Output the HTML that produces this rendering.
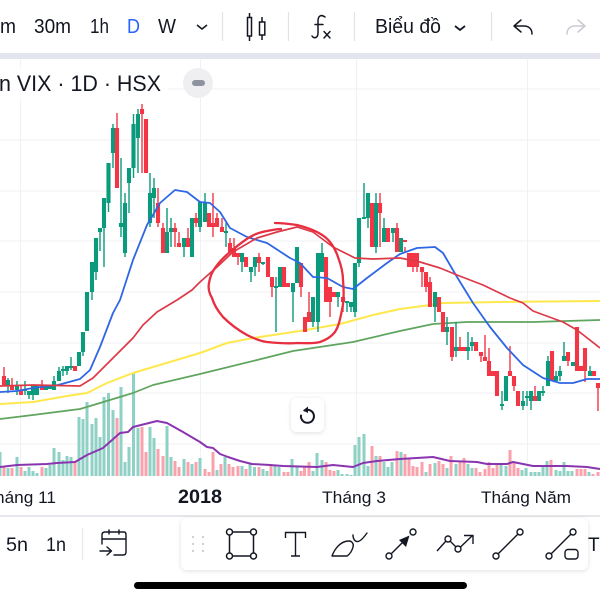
<!DOCTYPE html>
<html><head><meta charset="utf-8"><style>
html,body{margin:0;padding:0;background:#fff;width:600px;height:600px;overflow:hidden}
svg{display:block;filter:blur(.35px)}
text{font-family:"Liberation Sans",sans-serif;fill:#131722}
</style></head><body>
<svg width="600" height="600" viewBox="0 0 600 600" xmlns="http://www.w3.org/2000/svg">
<defs><filter id="s" x="-20%" y="-30%" width="140%" height="160%"><feDropShadow dx="0" dy="1" stdDeviation="2" flood-color="#000" flood-opacity=".13"/></filter></defs>
<rect width="600" height="600" fill="#fff"/>
<!-- grid -->
<path d="M0 89H600M0 140H600M0 191H600M0 241H600M0 292H600M0 343H600M0 393H600M0 444H600M20.500 59V476M200.500 59V476M356.500 59V476M527.500 59V476" stroke="#f0f1f4" stroke-width="1" fill="none"/>
<!-- volume -->
<path fill="none" stroke="#8fd1c4" stroke-width="3" d="M0 476V452M8 476V468M17 476V457M25 476V471M29 476V467M33 476V471M37 476V473M46 476V468M50 476V465M54 476V448M59 476V452M63 476V460M67 476V456M71 476V457M79 476V417M83 476V419M87 476V402M92 476V424M96 476V418M100 476V437M104 476V397M108.500 476V393M113 476V410M121 476V387M125 476V462M129 476V447M133.500 476V373M138 476V428M150 476V427M154 476V438M167 476V426M171 476V457M184 476V459M192 476V464M200 476V458M217 476V470M225 476V457M242 476V466M250 476V464M254.500 476V467M263 476V469M267 476V471M275 476V466M279 476V467M292 476V459M297 476V466M313 476V471M317 476V453M322 476V460M338 476V470M342 476V474M347 476V474M351 476V475M355 476V445M359 476V437M364 476V434M368 476V466M376 476V456M384 476V462M388 476V467M392 476V462M401 476V452M426 476V472M435 476V463M447 476V468M456 476V464M468 476V464M472 476V468M501 476V463M506 476V466M522 476V470M526 476V468M531 476V472M535 476V472M539 476V472M543 476V467M547 476V461M556 476V470M560 476V471M564 476V462M568 476V471M572 476V471M589 476V472"/>
<path fill="none" stroke="#f9a2ac" stroke-width="3" d="M4 476V467M12 476V468M21 476V467M42 476V467M75 476V462M117 476V418M142 476V427M146 476V452M158 476V449M163 476V456M175 476V461M179 476V467M188 476V462M196 476V462M205 476V469M209 476V472M213 476V452M221 476V464M229 476V464M233 476V467M238 476V466M246 476V469M259 476V467M271 476V466M284 476V472M288 476V472M301 476V471M304.500 476V467M309 476V462M326 476V462M330 476V470M334 476V471M372 476V446M380 476V456M397 476V451M405 476V454M409 476V459M413 476V466M417 476V467M422 476V462M430 476V464M439 476V461M443 476V464M451 476V456M460 476V461M464 476V458M476 476V468M480 476V472M485 476V469M489 476V462M493 476V468M497 476V463M510 476V450M514 476V462M518 476V468M551 476V460M577 476V469M581 476V469M585 476V469M593 476V474M598 476V472"/>
<!-- MA lines -->
<polyline fill="none" stroke="#8a35b0" stroke-width="2" stroke-linejoin="round" points="0,467 17,465 47,464 57,463 75,462 87,455 103,448 120,433 128,432 133,427 157,421 167,423 183,432 200,442 207,447 213,448 220,454 228,457 240,461 252,464 270,465 283,466 317,467 333,465 353,467 363,463 377,461 400,459 433,457 450,461 477,462 487,464 507,464 513,462 533,466 567,466 587,467 600,469"/>
<polyline fill="none" stroke="#5fa55f" stroke-width="1.700" stroke-linejoin="round" points="0,419 33,415 80,409 100,403 133,393 153,385 200,374 257,360 293,351 353,342 400,331 433,324 467,322 533,322 600,320"/>
<polyline fill="none" stroke="#ffe84d" stroke-width="2" stroke-linejoin="round" points="0,404 33,402 67,396 87,393 107,383 133,373 200,353 227,343 253,338 300,331 340,324 373,315 400,309 430,305 443,303 500,302 600,301"/>
<!-- candles -->
<path fill="none" stroke="#0a9a7c" stroke-width="1.400" d="M8 378V393M17 381V395M25 381V395M29 391V399M33 386V400M37 386V395M46 386V390M50 386V389M54 376V390M59 367V381M63 366V376M67 366V375M71 357V370M79 352V366M83 332V356M87 292V331M92 262V300M96 238V280M100 228V251M104 198V267M108.500 163V212M113 124V168M121 158V237M125 193V257M129 168V213M133.500 114V178M138 109V173M150 173V227M154 178V218M167 208V253M171 218V247M184 238V257M192 218V257M200 202V232M205 193V222M226 223V247M242 253V272M251 267V282M255 257V276M263 262V265M276 277V332M280 267V287M293 283V322M297 247V283M313 297V327M318 253V332M322 243V272M338 292V307M347 302V312M351 302V312M355 263V317M359 218V267M364 183V218M368 193V228M376 193V253M384 218V242M393 228V242M401 238V252M435 292V322M447 317V345M456 322V357M468 332V360M472 337V351M502 391V410M506 376V401M523 391V410M527 391V406M531 391V410M539 391V401M543 386V396M548 356V386M556 371V382M560 366V381M564 342V361M573 362V366M590 366V376"/>
<path fill="none" stroke="#0a9a7c" stroke-width="4.100" d="M8 380V385M17 385V390M25 389V391M29 391V395M33 386V395M37 386V395M46 386V390M50 386V389M54 381V390M59 371V381M63 369V371M67 366V371M71 366V368M79 352V366M83 332V352M87 292V331M92 262V292M96 238V272M100 228V232M104 198V228M108.500 163V203M113 128V153M121 223V227M125 203V253M129 168V183M133.500 124V168M138 114V138M150 193V223M154 188V198M167 232V253M171 228V232M184 238V247M192 218V257M200 202V227M205 203V222M226 231V233M242 253V262M251 267V272M255 257V267M263 262V264M276 286V288M280 267V287M293 283V292M297 247V283M313 297V322M318 253V322M322 253V272M338 292V297M347 301V303M351 302V307M355 263V312M359 218V263M364 217V219M368 193V218M376 203V247M384 228V242M393 228V233M401 238V252M435 292V307M447 327V332M456 347V351M468 347V351M472 342V346M502 404V406M506 376V401M523 401V406M527 396V398M531 391V401M539 391V401M543 391V393M548 361V386M556 376V381M560 371V376M564 356V361M573 362V366M590 371V376"/>
<path fill="none" stroke="#f23645" stroke-width="1.400" d="M4 367V385M12 378V390M21 385V395M42 380V390M75 366V371M117 113V188M142 104V173M158 188V227M163 223V253M175 223V247M179 232V247M188 228V247M196 213V227M209 213V227M213 193V237M217 213V227M222 218V232M230 238V252M234 238V257M238 253V265M246 257V267M259 253V272M268 257V277M272 277V297M288 283V287M301 263V297M309 292V322M326 257V302M330 287V317M334 292V297M343 297V312M372 203V247M380 193V247M388 228V242M397 223V252M405 247V253M409 253V267M413 253V272M417 253V272M422 267V287M426 272V292M430 277V307M439 297V312M443 312V332M452 327V361M460 337V351M464 347V348M476 342V351M481 352V362M485 335V361M489 348V376M493 371V376M497 371V396M510 346V376M514 376V391M518 391V406M535 386V401M552 351V381M568 352V366M577 327V371M581 366V371M585 348V382M594 371V376M598 383V411"/>
<path fill="none" stroke="#f23645" stroke-width="4.100" d="M4 376V385M12 385V390M21 391V395M42 385V390M75 366V371M117 128V188M142 109V114M146 119V173M158 203V223M163 228V253M175 228V232M179 243V247M188 238V247M196 218V223M209 213V227M213 223V227M217 218V227M222 227V232M230 243V252M234 248V257M238 253V257M246 257V267M259 257V263M268 257V277M272 277V287M284 267V287M288 283V287M301 263V287M305 317V332M309 312V322M326 257V302M330 287V302M334 292V297M343 297V302M372 203V247M380 203V213M388 228V242M397 228V252M405 240V242M409 253V267M413 253V267M417 253V267M422 267V272M426 272V287M430 282V307M439 297V312M443 312V332M452 327V357M460 347V351M464 347V351M476 342V351M481 352V356M485 357V361M489 361V376M493 371V376M497 371V396M510 371V376M514 376V386M518 391V406M535 396V401M552 351V381M568 352V361M577 327V371M581 366V371M585 348V371M594 371V376M598 383V388"/>
<polyline fill="none" stroke="#2f66e4" stroke-width="1.800" stroke-linejoin="round" points="0,392 17,391 33,388 58,385 80,379 90,370 100,347 113,313 120,300 133,260 147,225 160,203 175,190 187,192 200,202 210,203 220,212 230,228 247,237 267,243 290,258 300,263 313,277 327,278 343,287 353,289 367,278 387,263 400,254 417,248 435,247 443,253 457,277 473,303 490,327 507,348 523,365 543,378 560,383 573,383 587,379 600,379"/>
<polyline fill="none" stroke="#dd3a48" stroke-width="1.700" stroke-linejoin="round" points="0,386 33,385 80,386 93,378 113,358 133,338 143,325 157,312 177,300 192,290 200,282 217,267 233,252 257,238 277,232 297,227 313,232 333,247 355,258 373,259 400,258 420,262 440,268 457,275 483,285 510,298 523,303 533,311 563,322 577,330 600,348"/>
<!-- hand circle -->
<path fill="none" stroke="#e72f40" stroke-width="2.300" stroke-linecap="round" stroke-linejoin="round" d="M275 223C283 223 290 224 297 225C305 227 311 229 317 232C323 235 327 238 330 242C334 247 336 251 338 257C341 265 343 272 343 280C344 291 344 301 342 310C340 319 339 326 335 332C331 337 326 340 320 342C313 344 305 343 297 343C287 344 277 343 267 342C260 341 253 338 247 335C238 330 230 324 223 317C218 311 214 305 212 298C209 293 208 288 209 283C210 277 212 272 215 268C219 262 224 257 230 252C236 247 243 241 250 237C255 234 261 232 267 231C272 230 277 229 281 229"/>
<!-- reset button -->
<rect x="291" y="398" width="33" height="34" rx="6" fill="#fff" filter="url(#s)"/>
<path fill="none" stroke="#131722" stroke-width="2" stroke-linecap="round" d="M304.500 410.500A6.500 6.500 0 1 1 301 415.500"/>
<path fill="#131722" d="M308 406.500V413L303 410.500Z"/>
<!-- top bar -->
<rect x="0" y="0" width="600" height="53" fill="#fff"/>
<rect x="0" y="53" width="600" height="6" fill="#e3e5ec"/>
<text x="0" y="33" font-size="20" textLength="16" lengthAdjust="spacingAndGlyphs">m</text>
<text x="34" y="33" font-size="20" textLength="37" lengthAdjust="spacingAndGlyphs">30m</text>
<text x="90" y="33" font-size="20" textLength="19" lengthAdjust="spacingAndGlyphs">1h</text>
<text x="127" y="33" font-size="20" textLength="13" lengthAdjust="spacingAndGlyphs" style="fill:#2962ff">D</text>
<text x="158" y="33" font-size="20" textLength="18" lengthAdjust="spacingAndGlyphs">W</text>
<path fill="none" stroke="#131722" stroke-width="1.500" d="M197 25L202 29L207 25"/>
<path stroke="#e2e3e8" stroke-width="1.200" d="M222.500 12V41M288.500 12V41M354.500 12V41M491.500 12V41"/>
<path fill="none" stroke="#131722" stroke-width="1.500" d="M249.500 13V17M249.500 36V41M262 17V22M262 35V40"/>
<rect x="247.500" y="17.500" width="4" height="18.500" fill="none" stroke="#131722" stroke-width="1.500"/>
<rect x="259.500" y="22" width="5.300" height="13" fill="none" stroke="#131722" stroke-width="1.500"/>
<path fill="none" stroke="#131722" stroke-width="1.500" stroke-linecap="round" d="M325 17C321 14 318 16 318 21V33C318 38 314 39 312 36M315 24.500H323"/>
<path fill="none" stroke="#131722" stroke-width="1.500" stroke-linecap="round" d="M324 31.500L330 38M330 31.500L324 38"/>
<text x="375" y="33" font-size="20" textLength="66" lengthAdjust="spacingAndGlyphs">Biểu đồ</text>
<path fill="none" stroke="#131722" stroke-width="1.800" d="M455 26L460 30L465 26"/>
<path fill="none" stroke="#131722" stroke-width="1.500" stroke-linecap="round" stroke-linejoin="round" d="M521 20L514 26L521 32M514.500 26H524C529 26 532 29 532 34"/>
<path fill="none" stroke="#c9cbd2" stroke-width="1.500" stroke-linecap="round" stroke-linejoin="round" d="M578 20L585 26L578 32M584.500 26H575C570 26 567 29 567 34"/>
<!-- title -->
<rect x="0" y="66" width="168" height="34" fill="#fff" opacity=".7"/>
<text x="-1" y="91" font-size="22" textLength="162" lengthAdjust="spacingAndGlyphs">n VIX · 1D · HSX</text>
<circle cx="198" cy="83" r="15" fill="#efeff2"/>
<rect x="192" y="80" width="13" height="6" rx="3" fill="#8f93a0"/>
<!-- axis -->
<rect x="0" y="476" width="600" height="39" fill="#fff"/>
<rect x="0" y="515" width="600" height="2" fill="#e6e7ea"/>
<text x="-5" y="503" font-size="17" textLength="61" lengthAdjust="spacingAndGlyphs">háng 11</text>
<text x="178" y="503" font-size="19" font-weight="bold" textLength="44" lengthAdjust="spacingAndGlyphs">2018</text>
<text x="322" y="503" font-size="17" textLength="64" lengthAdjust="spacingAndGlyphs">Tháng 3</text>
<text x="481" y="503" font-size="17" textLength="90" lengthAdjust="spacingAndGlyphs">Tháng Năm</text>
<!-- bottom bar -->
<text x="6" y="551" font-size="19" textLength="22" lengthAdjust="spacingAndGlyphs">5n</text>
<text x="46" y="551" font-size="19" textLength="20" lengthAdjust="spacingAndGlyphs">1n</text>
<path stroke="#e6e7ea" stroke-width="1.200" d="M82.500 528V560"/>
<path fill="none" stroke="#131722" stroke-width="1.400" stroke-linecap="round" stroke-linejoin="round" d="M102 544V535C102 533 103 532 105 532H124C125.500 532 126 533 126 535V552C126 554 125 555 123 555H114M102 539H126M109 530V534M119 530V534M100 551H111M107 547L111.500 551L107 555"/>
<rect x="181" y="518" width="407" height="52" rx="6" fill="#fff" filter="url(#s)"/>
<g fill="#cfd0d5"><circle cx="193" cy="537" r="1.200"/><circle cx="203" cy="537" r="1.200"/><circle cx="193" cy="544" r="1.200"/><circle cx="203" cy="544" r="1.200"/><circle cx="193" cy="551" r="1.200"/><circle cx="203" cy="551" r="1.200"/></g>
<g fill="#fff" stroke="#131722" stroke-width="1.500">
<path fill="none" d="M229.500 532H253.500V556H229.500Z"/>
<circle cx="229.500" cy="532" r="3"/><circle cx="253.500" cy="532" r="3"/><circle cx="229.500" cy="556" r="3"/><circle cx="253.500" cy="556" r="3"/>
</g>
<path fill="none" stroke="#131722" stroke-width="1.400" d="M285.500 538V532.500H305.500V538M295.500 532.500V556M291 556H300"/>
<path fill="none" stroke="#131722" stroke-width="1.400" stroke-linejoin="round" stroke-linecap="round" d="M332 556C335 548 341 541 349 541C352 541 354 544 353 547C352 551 350 554 347 556ZM353 535C353 539 355 542 358 541.500C361 541 364 537 367 533"/>
<path fill="none" stroke="#131722" stroke-width="1.400" d="M391.500 553.500L403 542"/>
<path fill="#131722" d="M409.500 535.500L406 547L399 540Z"/>
<circle cx="389" cy="556" r="3" fill="#fff" stroke="#131722" stroke-width="1.400"/>
<circle cx="413" cy="532" r="3" fill="#fff" stroke="#131722" stroke-width="1.400"/>
<path fill="none" stroke="#131722" stroke-width="1.400" stroke-linejoin="round" d="M437 551L446 541M450 541L456 547M460.500 547L472.500 535.500M464 535.500H473V544"/>
<circle cx="448" cy="539" r="3" fill="#fff" stroke="#131722" stroke-width="1.400"/>
<circle cx="458" cy="549" r="3" fill="#fff" stroke="#131722" stroke-width="1.400"/>
<path fill="none" stroke="#131722" stroke-width="1.400" d="M498 554L518 534"/>
<circle cx="496" cy="556" r="3" fill="#fff" stroke="#131722" stroke-width="1.400"/>
<circle cx="520" cy="532" r="3" fill="#fff" stroke="#131722" stroke-width="1.400"/>
<path fill="none" stroke="#131722" stroke-width="1.400" d="M551 554L571 534"/>
<circle cx="549" cy="556" r="3" fill="#fff" stroke="#131722" stroke-width="1.400"/>
<circle cx="573" cy="532" r="3" fill="#fff" stroke="#131722" stroke-width="1.400"/>
<rect x="565" y="549.500" width="13" height="9.500" rx="3" fill="#fff" stroke="#131722" stroke-width="1.400"/>
<text x="588" y="551" font-size="19">T</text>
<rect x="134" y="582" width="333" height="7" rx="3.500" fill="#000"/>
</svg>
</body></html>
